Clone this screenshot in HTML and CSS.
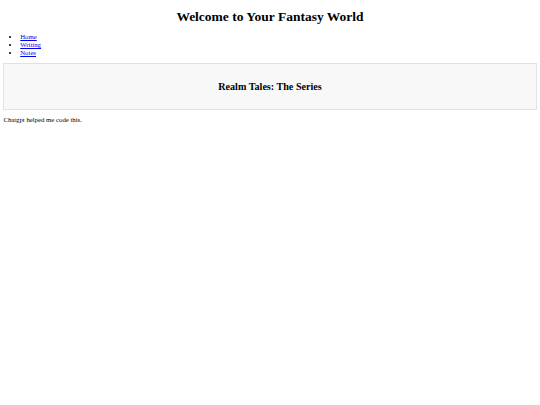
FILE: index.html
```html
<!DOCTYPE html>
<html lang="en">
<head>
<meta charset="utf-8">
<title>Welcome to Your Fantasy World</title>
<link rel="stylesheet" href="styles.css">
</head>
<body>
<header class="site-header">
  <h1 class="site-title">Welcome to Your Fantasy World</h1>
</header>
<nav class="site-nav">
  <ul class="nav-list">
    <li><a href="#home">Home</a></li>
    <li><a href="#writing">Writing</a></li>
    <li><a href="#notes">Notes</a></li>
  </ul>
</nav>
<section class="series">
  <h2 class="series-title">Realm Tales: The Series</h2>
</section>
<footer class="site-footer">
  <p class="credit">Chatgpt helped me code this.</p>
</footer>
</body>
</html>
```

FILE: styles.css
```css
html {
  background: #ffffff;
}

body {
  margin: 3.375px;
  font-family: "Liberation Serif", "Times New Roman", serif;
  font-size: 6.75px;
  color: #000000;
}

.site-title {
  font-size: 13.5px;
  font-weight: bold;
  text-align: center;
  margin: 6.05px 0 8.05px;
}

.nav-list {
  margin: 6.75px 0;
  padding-left: 16.875px;
  list-style: disc;
  line-height: 7.6px;
}

.nav-list a {
  color: #0000ee;
  text-decoration: underline;
}

.series {
  background: #f8f8f8;
  border: 1px solid #e2e2e2;
  padding: 8.4375px;
  margin: 0;
}

.series-title {
  font-size: 10.125px;
  font-weight: bold;
  text-align: center;
  margin: 8.4px 0;
}

.credit {
  margin: 6.75px 0;
}
```
